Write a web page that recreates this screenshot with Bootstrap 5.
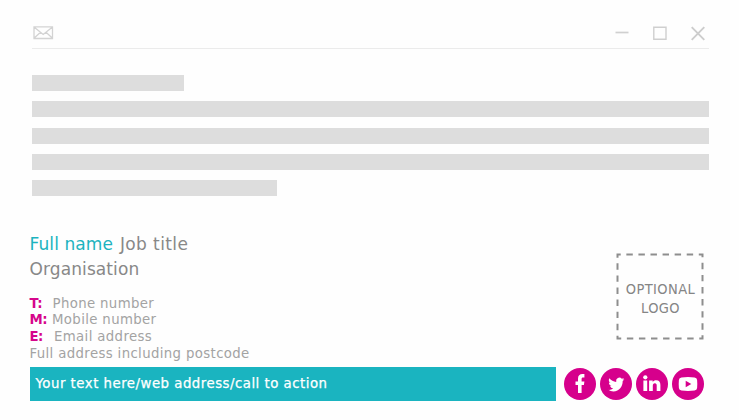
<!DOCTYPE html>
<html lang="en">
<head>
<meta charset="utf-8">
<meta name="viewport" content="width=device-width, initial-scale=1">
<title>Email signature</title>
<link href="https://cdn.jsdelivr.net/npm/bootstrap@5.3.0/dist/css/bootstrap.min.css" rel="stylesheet">
<style>
body{width:739px;height:420px;overflow:hidden;background:#fefefe;font-family:"DejaVu Sans",Verdana,sans-serif;color:#888}
svg{display:block;flex:none}
.mail-window{padding:24px 30px 0 32px}
.title-bar{height:25px;width:677px;border-bottom:1px solid #ebebeb}
.envelope{margin:2px 0 0 1px}
.controls{gap:24px;margin-right:4.500px}
.message{padding-top:26px;gap:10.3px}
.line{height:16px;width:677px;background:#ddd}
.line-first{width:152px}
.line-last{width:245px}
.signature{padding:36.200px 35px 0 29.500px;height:170.800px}
.heading-text{font-size:17px;line-height:25px;letter-spacing:.1px}
.job{letter-spacing:.4px;margin-left:1px}
.teal{color:#1cb3bf}
.contact{font-size:13.3px;line-height:16.6px;letter-spacing:.36px;color:#a3a3a3;margin-top:13.500px}
.contact b{color:#d6068b;display:inline-block;letter-spacing:-.6px}
.key-t{width:23px}.key-m{width:22.500px}.key-e{width:24.500px}
.logo-box{width:88px;height:87px;margin-top:20.800px}
.logo-box svg{position:absolute;left:0;top:0}
.logo-text{font-family:"DejaVu Sans Condensed","DejaVu Sans",sans-serif;font-stretch:condensed;font-size:14.5px;letter-spacing:.4px;line-height:19px;color:#858585;padding:5px 0 0 1px}
.footer-row{padding-left:30px;gap:8px}
.cta{width:526px;height:34px;padding-left:5.500px;background:#1ab4c0;color:#fff;font-size:13.3px;letter-spacing:.5px;-webkit-text-stroke:.25px #fff}
.social{gap:4px}
</style>
</head>
<body>
<header class="mail-window">
  <div class="title-bar d-flex justify-content-between">
    <svg class="envelope" width="21" height="14" viewBox="0 0 21 14" fill="none" stroke="#d3d3d3" stroke-width="1.3"><path d="M1 .8h18.5v11.7H1zM1 1l9.2 7.5L19.500 1M1 12.300l6.500-6M19.500 12.300l-6.500-6"/></svg>
    <div class="controls d-flex">
      <svg width="14" height="18" viewBox="0 0 14 18"><path d="M.5 8.500h13" stroke="#d0d0d0" stroke-width="1.700"/></svg>
      <svg width="14" height="18" viewBox="0 0 14 18"><path d="M.8 3.300h12.200v12H.8z" fill="none" stroke="#cfcfcf" stroke-width="1.400"/></svg>
      <svg width="14" height="18" viewBox="0 0 14 18"><path d="M.7 3.200l12.600 12.600M13.300 3.200L.7 15.800" stroke="#cdcdcd" stroke-width="1.900"/></svg>
    </div>
  </div>
  <div class="message d-flex flex-column">
    <div class="line line-first"></div>
    <div class="line"></div>
    <div class="line"></div>
    <div class="line"></div>
    <div class="line line-last"></div>
  </div>
</header>
<main class="signature d-flex justify-content-between">
  <div>
    <div class="heading-text"><span class="teal">Full name</span><span class="job"> Job title</span></div>
    <div class="heading-text">Organisation</div>
    <div class="contact text-nowrap">
      <div><b class="key-t">T:</b>Phone number</div>
      <div><b class="key-m">M:</b>Mobile number</div>
      <div><b class="key-e">E:</b>Email address</div>
      <div>Full address including postcode</div>
    </div>
  </div>
  <div class="logo-box position-relative d-flex align-items-center justify-content-center text-center">
    <svg width="88" height="87" viewBox="0 0 88 87"><rect x="1.500" y="1.500" width="85" height="84" fill="none" stroke="#8e8e8e" stroke-width="2" pathLength="336" stroke-dasharray="6.400 5.600" stroke-dashoffset="3.200"/></svg>
    <div class="logo-text">OPTIONAL<br>LOGO</div>
  </div>
</main>
<footer class="footer-row d-flex align-items-center">
  <div class="cta d-flex align-items-center text-nowrap">Your text here/web address/call to action</div>
  <div class="social d-flex">
    <svg width="32" height="32" viewBox="0 0 32 32"><circle cx="16" cy="16" r="16" fill="#d6008c"/><path fill="#fff" d="M14 25v-8h-2.500v-3.500H14v-2.700c0-3.200 1.700-4.700 4.400-4.700h2v3.400h-1.300c-1.200 0-1.500.6-1.500 1.600v2.400h2.800l-.5 3.500h-2.300v8z"/></svg>
    <svg width="32" height="32" viewBox="0 0 32 32"><circle cx="16" cy="16" r="16" fill="#d6008c"/><g transform="translate(8.300 7.500) scale(1 1.060)"><path fill="#fff" d="M5.026 15c6.038 0 9.341-5.003 9.341-9.334 0-.14 0-.282-.006-.422A6.685 6.685 0 0 0 16 3.542a6.658 6.658 0 0 1-1.889.518 3.301 3.301 0 0 0 1.447-1.817 6.533 6.533 0 0 1-2.087.793A3.286 3.286 0 0 0 7.875 6.030a9.325 9.325 0 0 1-6.767-3.429 3.289 3.289 0 0 0 1.018 4.382A3.323 3.323 0 0 1 .64 6.575v.045a3.288 3.288 0 0 0 2.632 3.218 3.203 3.203 0 0 1-.865.115 3.230 3.230 0 0 1-.614-.057 3.283 3.283 0 0 0 3.067 2.277A6.588 6.588 0 0 1 .78 13.580a6.320 6.320 0 0 1-.78-.045A9.344 9.344 0 0 0 5.026 15"/></g></svg>
    <svg width="32" height="32" viewBox="0 0 32 32"><circle cx="16" cy="16" r="16" fill="#d6008c"/><g fill="#fff"><circle cx="9.300" cy="9.300" r="2.100"/><path d="M7.400 12.500h3.800v10.400H7.400zM13.100 12.500h3.600v1.400c.8-1.200 1.900-1.700 3.400-1.700 3 0 4.300 1.900 4.300 4.700v6h-3.700v-5.300c0-1.400-.5-2.300-1.800-2.300-1.500 0-2.100 1-2.100 2.500v5.100h-3.700z"/></g></svg>
    <svg width="32" height="32" viewBox="0 0 32 32"><circle cx="16" cy="16" r="16" fill="#d6008c"/><path fill="#fff" d="M9.500 9.400q6.500-.7 13 0 2.400.2 2.600 2.600.4 4 0 8-.2 2.400-2.600 2.600-6.500.7-13 0-2.400-.2-2.600-2.600-.4-4 0-8 .2-2.400 2.600-2.600z"/><path fill="#d6008c" d="M13.700 12.700l5.600 3.300-5.600 3.300z"/></svg>
  </div>
</footer>
<script src="https://cdn.jsdelivr.net/npm/bootstrap@5.3.0/dist/js/bootstrap.bundle.min.js"></script>
</body>
</html>
